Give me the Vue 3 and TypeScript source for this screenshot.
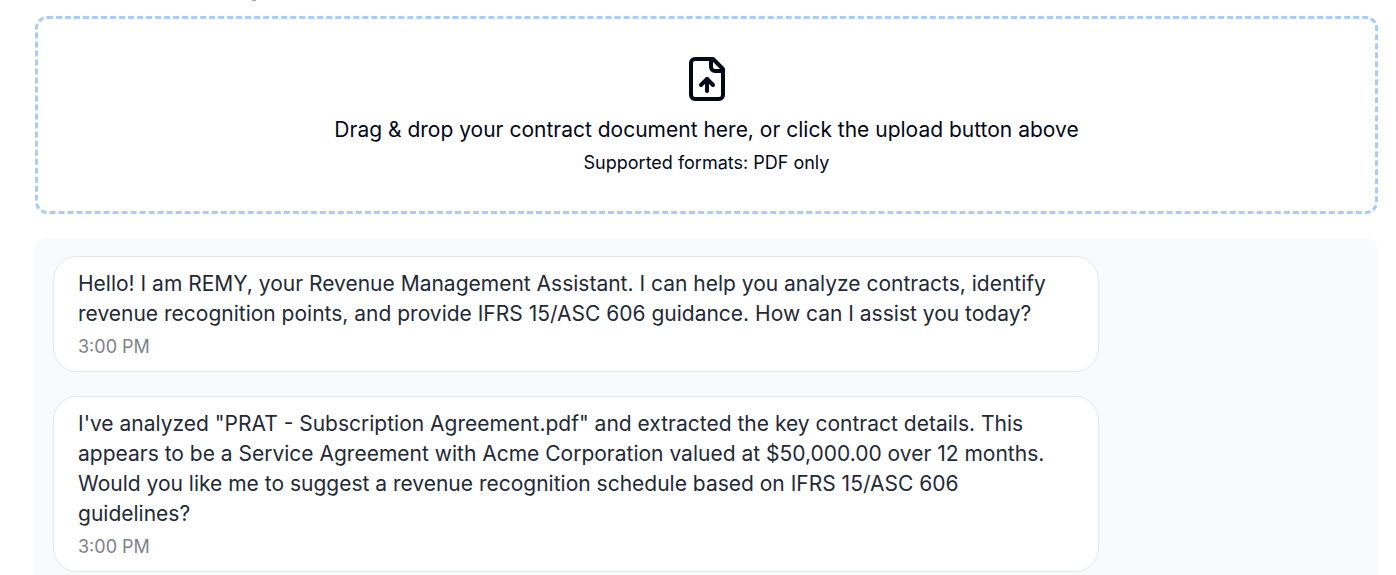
<script setup lang="ts">
interface Message {
  id: number
  text: string
  time: string
}

const messages: Message[] = [
  {
    id: 1,
    text: 'Hello! I am REMY, your Revenue Management Assistant. I can help you analyze contracts, identify revenue recognition points, and provide IFRS 15/ASC 606 guidance. How can I assist you today?',
    time: '3:00 PM',
  },
  {
    id: 2,
    text: 'I\'ve analyzed "PRAT - Subscription Agreement.pdf" and extracted the key contract details. This appears to be a Service Agreement with Acme Corporation valued at $50,000.00 over 12 months. Would you like me to suggest a revenue recognition schedule based on IFRS 15/ASC 606 guidelines?',
    time: '3:00 PM',
  },
]
</script>

<template>
  <main class="page">
    <span class="mark" aria-hidden="true"></span>
    <section class="dropzone">
      <svg class="icon" viewBox="0 0 24 24" aria-hidden="true">
        <path d="M15 2H6a2 2 0 0 0-2 2v16a2 2 0 0 0 2 2h12a2 2 0 0 0 2-2V7Z" />
        <path d="M14 2v4a2 2 0 0 0 2 2h4" />
        <path d="M12 12v6" />
        <path d="m15 15-3-3-3 3" />
      </svg>
      <p class="title">Drag &amp; drop your contract document here, or click the upload button above</p>
      <p class="hint">Supported formats: PDF only</p>
    </section>
    <section class="chat">
      <article v-for="m in messages" :key="m.id" class="bubble">
        <p class="text">{{ m.text }}</p>
        <time class="time">{{ m.time }}</time>
      </article>
    </section>
  </main>
</template>

<style>
body {
  margin: 0;
  background: #fff;
}
</style>

<style scoped>
.page {
  box-sizing: border-box;
  height: 100vh;
  overflow: hidden;
  padding: 0 18px 0 35px;
  font-family: Inter, "Liberation Sans", sans-serif;
  color: #020817;
}
.mark {
  display: block;
  width: 4px;
  height: 1px;
  margin: 0 0 15px 217px;
  background: #a3a8b0;
}
p {
  margin: 0;
}
.dropzone {
  display: flex;
  flex-direction: column;
  align-items: center;
  padding: 36px 24px;
  border: 3px dashed #a9cdf8;
  border-radius: 12px;
  text-align: center;
}
.icon {
  width: 48px;
  height: 48px;
  margin-bottom: 12px;
  fill: none;
  stroke: currentColor;
  stroke-width: 2;
  stroke-linecap: round;
  stroke-linejoin: round;
}
.title {
  font-size: 21px;
  line-height: 30px;
}
.hint {
  margin-top: 6px;
  font-size: 18px;
  line-height: 24px;
}
.chat {
  display: flex;
  flex-direction: column;
  align-items: flex-start;
  gap: 24px;
  margin-top: 24px;
  padding: 18px;
  border-radius: 12px;
  background: #f9fafc;
}
.bubble {
  box-sizing: border-box;
  max-width: 80%;
  padding: 12px 24px;
  border: 1px solid #e5e7eb;
  border-radius: 24px;
  background: #fff;
}
.text {
  font-size: 21px;
  line-height: 30px;
  color: #1f2937;
}
.time {
  display: block;
  margin-top: 6px;
  font-size: 18px;
  line-height: 24px;
  color: #7d828b;
}
</style>
